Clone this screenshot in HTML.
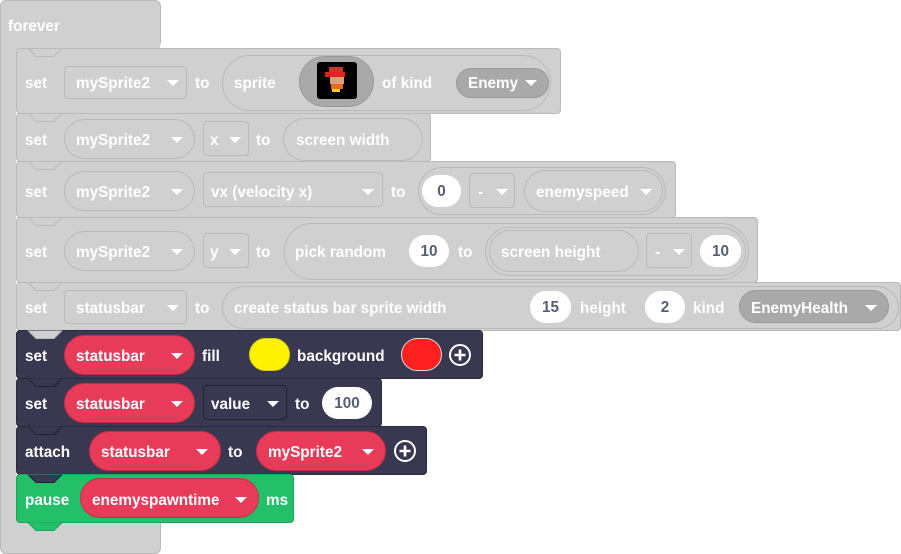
<!DOCTYPE html>
<html><head><meta charset="utf-8"><style>
*{margin:0;padding:0;box-sizing:border-box}
body{width:901px;height:554px;background:#fff;position:relative;overflow:hidden;font-family:"Liberation Sans",sans-serif;font-weight:bold;font-size:15.3px;color:#fff}
div{position:absolute}
.g{background:#d0d0d0;border:1px solid #b9b9b9;border-radius:4px}
.d{background:#383850;border:1px solid #2a2a3c;border-radius:4px}
.gr{background:#23bf69;border:1px solid #1ea35a;border-radius:4px}
.t{line-height:18px;white-space:nowrap;transform:translateY(2px)}
.dd{border:1px solid #b9b9b9;border-radius:4px;background:#d0d0d0}
.pl{border:1px solid #b9b9b9;border-radius:22px;background:#d0d0d0}
.rd{background:#e83b5a;border:1px solid #c92c48;border-radius:22px}
.dk{background:#383850;border:1px solid #22222f;border-radius:4px}
.w{background:#fff;border-radius:20px;color:#575e75;text-align:center;line-height:34px}
.ar{width:0;height:0;border-left:6px solid transparent;border-right:6px solid transparent;border-top:6px solid #fff;transform:translateY(1px)}
</style></head><body>
<!-- forever frame -->
<div class="g" style="left:0;top:0;width:161px;height:48px;border-radius:6px"></div>
<div style="left:0;top:30px;width:16px;height:500px;background:#d0d0d0;border-left:1px solid #b9b9b9"></div>
<div class="g" style="left:0;top:520px;width:161px;height:34px;border-top:none;border-radius:0 0 6px 6px"></div>
<div style="left:1px;top:40px;width:159px;height:10px;background:#d0d0d0"></div>
<div class="t" style="left:8px;top:16px">forever</div>

<!-- rows -->
<div class="g" style="left:16px;top:48px;width:545px;height:66px"></div>
<div class="g" style="left:16px;top:113px;width:415px;height:49px"></div>
<div class="g" style="left:16px;top:161px;width:660px;height:57px"></div>
<div class="g" style="left:16px;top:217px;width:742px;height:66px"></div>
<div class="g" style="left:16px;top:282px;width:885px;height:49px"></div>
<div class="d" style="left:16px;top:330px;width:467px;height:49px"></div>
<div class="d" style="left:16px;top:378px;width:366px;height:49px"></div>
<div class="d" style="left:16px;top:426px;width:411px;height:49px"></div>
<div class="gr" style="left:16px;top:474px;width:278px;height:49px"></div>

<svg style="position:absolute;left:0;top:0" width="901" height="554">
<g fill="none" stroke-width="1">
<path d="M28 48.5l8 8h18l8-8" stroke="#b9b9b9"/>
<path d="M28 113.5l8 8h18l8-8" stroke="#b9b9b9"/>
<path d="M28 161.5l8 8h18l8-8" stroke="#b9b9b9"/>
<path d="M28 217.5l8 8h18l8-8" stroke="#b9b9b9"/>
<path d="M28 282.5l8 8h18l8-8" stroke="#b9b9b9"/>
<path d="M28 330.5l8 8h18l8-8" stroke="#b9b9b9" fill="#d0d0d0"/>
<path d="M28 378.5l8 8h18l8-8" stroke="#22222f" fill="#383850"/>
<path d="M28 426.5l8 8h18l8-8" stroke="#22222f" fill="#383850"/>
<path d="M28 474.5l8 8h18l8-8" stroke="#22222f" fill="#383850"/>
<path d="M28 522.5l8 8h18l8-8" stroke="#1ea35a" fill="#23bf69"/>
</g>
</svg>

<!-- row1 -->
<div class="t" style="left:25px;top:73px">set</div>
<div class="dd" style="left:64px;top:66px;width:123px;height:33px"></div>
<div class="t" style="left:76px;top:73px">mySprite2</div><div class="ar" style="left:167px;top:79px"></div>
<div class="t" style="left:195px;top:73px">to</div>
<div class="pl" style="left:222px;top:55px;width:329px;height:56px;border-radius:28px"></div>
<div class="t" style="left:234px;top:73px">sprite</div>
<div style="left:299px;top:56px;width:75px;height:51px;border-radius:26px;background:#a9a9a9;border:1px solid #999"></div>
<div style="left:317px;top:62px;width:40px;height:37px;background:#000;border-radius:3px"></div>
<div style="left:329px;top:67px;width:14px;height:5px;background:#c0392b"></div>
<div style="left:325px;top:72px;width:20px;height:5px;background:#e52020"></div>
<div style="left:330px;top:77px;width:14px;height:7px;background:#d9a07a"></div>
<div style="left:331px;top:84px;width:12px;height:5px;background:#e86a1a"></div>
<div style="left:332px;top:89px;width:8px;height:3px;background:#f5d020"></div>
<div class="t" style="left:382px;top:73px">of kind</div>
<div style="left:456px;top:68px;width:93px;height:30px;border-radius:15px;background:#a9a9a9;border:1px solid #999"></div>
<div class="t" style="left:468px;top:73px">Enemy</div><div class="ar" style="left:525px;top:79px"></div>

<!-- row2 -->
<div class="t" style="left:25px;top:130px">set</div>
<div class="pl" style="left:64px;top:119px;width:131px;height:40px"></div>
<div class="t" style="left:76px;top:130px">mySprite2</div><div class="ar" style="left:171px;top:136px"></div>
<div class="dd" style="left:203px;top:121px;width:46px;height:35px"></div>
<div class="t" style="left:210px;top:130px">x</div><div class="ar" style="left:229px;top:136px"></div>
<div class="t" style="left:256px;top:130px">to</div>
<div class="pl" style="left:283px;top:118px;width:140px;height:43px"></div>
<div class="t" style="left:296px;top:130px">screen width</div>

<!-- row3 -->
<div class="t" style="left:25px;top:182px">set</div>
<div class="pl" style="left:64px;top:171px;width:131px;height:40px"></div>
<div class="t" style="left:76px;top:182px">mySprite2</div><div class="ar" style="left:171px;top:188px"></div>
<div class="dd" style="left:203px;top:172px;width:180px;height:35px"></div>
<div class="t" style="left:211px;top:182px">vx (velocity x)</div><div class="ar" style="left:362px;top:188px"></div>
<div class="t" style="left:391px;top:182px">to</div>
<div class="pl" style="left:418px;top:167px;width:248px;height:48px;border-radius:24px"></div>
<div class="w" style="left:422px;top:175px;width:39px;height:32px">0</div>
<div class="dd" style="left:469px;top:173px;width:46px;height:35px"></div>
<div class="t" style="left:478px;top:182px">-</div><div class="ar" style="left:496px;top:188px"></div>
<div class="pl" style="left:524px;top:170px;width:139px;height:42px"></div>
<div class="t" style="left:536px;top:182px">enemyspeed</div><div class="ar" style="left:640px;top:188px"></div>

<!-- row4 -->
<div class="t" style="left:25px;top:242px">set</div>
<div class="pl" style="left:64px;top:231px;width:131px;height:40px"></div>
<div class="t" style="left:76px;top:242px">mySprite2</div><div class="ar" style="left:171px;top:248px"></div>
<div class="dd" style="left:203px;top:233px;width:46px;height:35px"></div>
<div class="t" style="left:210px;top:242px">y</div><div class="ar" style="left:229px;top:248px"></div>
<div class="t" style="left:256px;top:242px">to</div>
<div class="pl" style="left:284px;top:223px;width:465px;height:57px;border-radius:28px"></div>
<div class="t" style="left:295px;top:242px">pick random</div>
<div class="w" style="left:409px;top:235px;width:40px;height:32px">10</div>
<div class="t" style="left:458px;top:242px">to</div>
<div class="pl" style="left:485px;top:227px;width:261px;height:49px;border-radius:25px"></div>
<div class="pl" style="left:489px;top:230px;width:150px;height:42px"></div>
<div class="t" style="left:501px;top:242px">screen height</div>
<div class="dd" style="left:646px;top:233px;width:46px;height:35px"></div>
<div class="t" style="left:655px;top:242px">-</div><div class="ar" style="left:673px;top:248px"></div>
<div class="w" style="left:700px;top:235px;width:41px;height:32px">10</div>

<!-- row5 -->
<div class="t" style="left:25px;top:298px">set</div>
<div class="dd" style="left:64px;top:290px;width:123px;height:34px"></div>
<div class="t" style="left:76px;top:298px">statusbar</div><div class="ar" style="left:167px;top:304px"></div>
<div class="t" style="left:195px;top:298px">to</div>
<div class="pl" style="left:222px;top:286px;width:677px;height:43px"></div>
<div class="t" style="left:234px;top:298px">create status bar sprite width</div>
<div class="w" style="left:530px;top:291px;width:41px;height:32px">15</div>
<div class="t" style="left:580px;top:298px">height</div>
<div class="w" style="left:645px;top:291px;width:40px;height:32px">2</div>
<div class="t" style="left:693px;top:298px">kind</div>
<div style="left:739px;top:290px;width:150px;height:33px;border-radius:17px;background:#a9a9a9;border:1px solid #999"></div>
<div class="t" style="left:751px;top:298px">EnemyHealth</div><div class="ar" style="left:865px;top:304px"></div>

<!-- row6 -->
<div class="t" style="left:25px;top:346px">set</div>
<div class="rd" style="left:64px;top:335px;width:131px;height:40px"></div>
<div class="t" style="left:76px;top:346px">statusbar</div><div class="ar" style="left:171px;top:352px"></div>
<div class="t" style="left:202px;top:346px">fill</div>
<div style="left:249px;top:338px;width:41px;height:33px;border-radius:17px;background:#fff200;border:1px solid #d8cf00"></div>
<div class="t" style="left:297px;top:346px">background</div>
<div style="left:401px;top:338px;width:41px;height:33px;border-radius:17px;background:#ff2020;border:1px solid #ddd"></div>
<svg style="position:absolute;left:448px;top:343px" width="24" height="24"><circle cx="12" cy="12" r="10" fill="none" stroke="#fff" stroke-width="2"/><path d="M12 6.5v11M6.5 12h11" stroke="#fff" stroke-width="2.6"/></svg>

<!-- row7 -->
<div class="t" style="left:25px;top:394px">set</div>
<div class="rd" style="left:64px;top:383px;width:131px;height:40px"></div>
<div class="t" style="left:76px;top:394px">statusbar</div><div class="ar" style="left:171px;top:400px"></div>
<div class="dk" style="left:203px;top:385px;width:84px;height:35px"></div>
<div class="t" style="left:211px;top:394px">value</div><div class="ar" style="left:267px;top:400px"></div>
<div class="t" style="left:295px;top:394px">to</div>
<div class="w" style="left:322px;top:387px;width:50px;height:32px">100</div>

<!-- row8 -->
<div class="t" style="left:25px;top:442px">attach</div>
<div class="rd" style="left:89px;top:431px;width:132px;height:40px"></div>
<div class="t" style="left:101px;top:442px">statusbar</div><div class="ar" style="left:196px;top:448px"></div>
<div class="t" style="left:228px;top:442px">to</div>
<div class="rd" style="left:256px;top:431px;width:130px;height:40px"></div>
<div class="t" style="left:268px;top:442px">mySprite2</div><div class="ar" style="left:362px;top:448px"></div>
<svg style="position:absolute;left:393px;top:439px" width="24" height="24"><circle cx="12" cy="12" r="10" fill="none" stroke="#fff" stroke-width="2"/><path d="M12 6.5v11M6.5 12h11" stroke="#fff" stroke-width="2.6"/></svg>

<!-- row9 -->
<div class="t" style="left:25px;top:490px">pause</div>
<div class="rd" style="left:80px;top:478px;width:179px;height:40px"></div>
<div class="t" style="left:92px;top:490px">enemyspawntime</div><div class="ar" style="left:235px;top:496px"></div>
<div class="t" style="left:266px;top:490px">ms</div>
</body></html>
